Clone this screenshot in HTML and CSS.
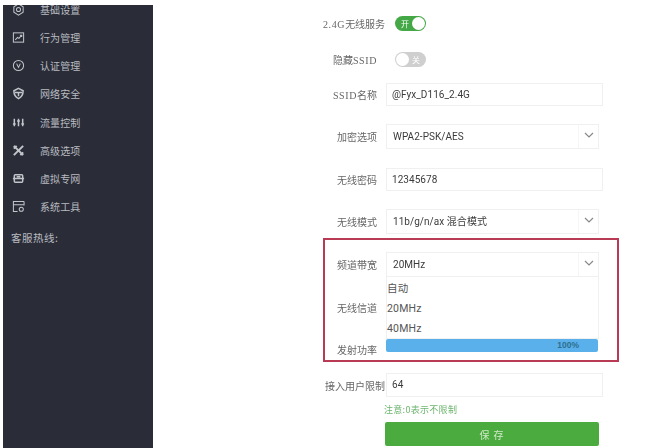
FILE: index.html
```html
<!DOCTYPE html>
<html lang="zh">
<head>
<meta charset="utf-8">
<title>2.4G无线设置</title>
<link rel="stylesheet" href="styles.css">
</head>
<body>
<div class="page">
  <aside class="sidebar">
    <ul class="menu">
      <li class="menu-item"><svg class="icon" viewBox="0 0 14 14"><path d="M7 1l5 3v6l-5 3-5-3V4z"/><circle cx="7" cy="7" r="2.2"/></svg><span>基础设置</span></li>
      <li class="menu-item"><svg class="icon" viewBox="0 0 14 14"><rect x="1.5" y="2" width="11" height="10"/><path d="M3.5 9.5L6 7l1.5 1L10.500 4.500M8.500 4.500h2v2"/></svg><span>行为管理</span></li>
      <li class="menu-item"><svg class="icon" viewBox="0 0 14 14"><circle cx="7" cy="7" r="5.500"/><path d="M5 5l2 4 2-4"/></svg><span>认证管理</span></li>
      <li class="menu-item"><svg class="icon icon-bold" viewBox="0 0 14 14"><path d="M7 1.500l5 2.500c0 4-2 7-5 8.500-3-1.500-5-4.500-5-8.500z"/><path d="M3 6h8M7 6v4"/></svg><span>网络安全</span></li>
      <li class="menu-item"><svg class="icon icon-bold" viewBox="0 0 14 14"><path d="M2.500 3v8M7 3v8M11.500 3v8M1 8.500h3M5.500 5.500h3M10 8.500h3"/></svg><span>流量控制</span></li>
      <li class="menu-item"><svg class="icon icon-heavy" viewBox="0 0 14 14"><path d="M2 2l10 10M12 2L2 12M2 5l3-3M9 12l3-3"/></svg><span>高级选项</span></li>
      <li class="menu-item"><svg class="icon icon-bold" viewBox="0 0 14 14"><rect x="2.500" y="3" width="9" height="8" rx="1"/><path d="M1 7h12M5 5h4"/></svg><span>虚拟专网</span></li>
      <li class="menu-item"><svg class="icon" viewBox="0 0 14 14"><path d="M13 1.500H1.500v11H6M13 1.500V6M1.500 5H13"/><circle cx="10" cy="10" r="2.200"/></svg><span>系统工具</span></li>
    </ul>
    <p class="hotline">客服热线:</p>
  </aside>
  <main class="main">
    <form class="form">
      <div class="row row-toggle-first">
        <label class="label wide"><span class="latin">2.4G</span>无线服务</label>
        <span class="toggle toggle-on"><span class="toggle-text">开</span><span class="knob"></span></span>
      </div>
      <div class="row row-toggle-second">
        <label class="label">隐藏<span class="latin">SSID</span></label>
        <span class="toggle toggle-off"><span class="knob"></span><span class="toggle-text">关</span></span>
      </div>
      <div class="row">
        <label class="label"><span class="latin">SSID</span>名称</label>
        <div class="input">@Fyx_D116_2.4G</div>
      </div>
      <div class="row">
        <label class="label">加密选项</label>
        <div class="select"><span class="select-value">WPA2-PSK/AES</span><span class="select-arrow"><svg class="chevron" viewBox="0 0 10 6"><path d="M1 1l4 4 4-4"/></svg></span></div>
      </div>
      <div class="row row-loose">
        <label class="label">无线密码</label>
        <div class="input">12345678</div>
      </div>
      <div class="row">
        <label class="label">无线模式</label>
        <div class="select"><span class="select-value">11b/g/n/ax 混合模式</span><span class="select-arrow"><svg class="chevron" viewBox="0 0 10 6"><path d="M1 1l4 4 4-4"/></svg></span></div>
      </div>
      <div class="row">
        <label class="label">频道带宽</label>
        <div class="select select-open">
          <span class="select-value">20MHz</span><span class="select-arrow"><svg class="chevron" viewBox="0 0 10 6"><path d="M1 1l4 4 4-4"/></svg></span>
          <ul class="dropdown">
            <li class="option">自动</li>
            <li class="option">20MHz</li>
            <li class="option">40MHz</li>
          </ul>
        </div>
      </div>
      <div class="row row-channel">
        <label class="label">无线信道</label>
      </div>
      <div class="row row-power">
        <label class="label">发射功率</label>
        <div class="progress"><span class="progress-text">100%</span></div>
      </div>
      <div class="row">
        <label class="label wide">接入用户限制</label>
        <div class="input input-tall">64</div>
      </div>
      <p class="note">注意:0表示不限制</p>
      <button class="save" type="button">保 存</button>
    </form>
    <div class="highlight"></div>
  </main>
</div>
</body>
</html>
```
FILE: styles.css
```css
* { box-sizing: border-box; }
html, body { margin: 0; padding: 0; height: 100%; overflow: hidden; background: #fff; }
ul { list-style: none; margin: 0; padding: 0; }
p { margin: 0; }
.page {
  display: flex;
  height: 448px;
  padding-left: 3px;
  filter: blur(0.55px);
  font-family: "Noto Sans CJK SC", "Liberation Sans", sans-serif;
}
.sidebar {
  width: 150px;
  margin-top: 5px;
  flex: none;
  background: #2a2d38;
  color: #b9bbc0;
  overflow: hidden;
  font-size: 10px;
}
.menu { margin-top: -10px; }
.menu-item {
  display: flex;
  align-items: center;
  height: 28.25px;
  padding-left: 9px;
  letter-spacing: 0.1px;
}
.icon {
  width: 13px;
  height: 13px;
  margin-right: 15px;
  fill: none;
  stroke: #c2c4c9;
  stroke-width: 1.1;
}
.icon-bold { stroke-width: 1.6; }
.icon-heavy { stroke-width: 2.2; }
.hotline { margin: 10px 0 0 8px; font-size: 10.500px; letter-spacing: 0.5px; line-height: 14px; }
.main { position: relative; flex: 1; padding-left: 170px; }
.form { display: flex; flex-direction: column; gap: 18px; padding-top: 16px; }
.row { display: flex; align-items: center; }
.row-toggle-first { height: 15px; margin-bottom: 3px; }
.row-toggle-second { height: 15px; margin-bottom: -2px; }
.row-loose { margin-top: 1px; }
.row-channel { height: 25px; }
.row-power { height: 24px; margin-top: -1px; margin-bottom: -6px; }
.label {
  flex: none;
  width: 63px;
  padding-right: 9px;
  text-align: right;
  white-space: nowrap;
  font-family: "Liberation Serif", "Noto Sans CJK SC", serif;
  font-size: 10px;
  color: #666;
}
.label.wide { padding-right: 1px; }
.latin { letter-spacing: 0.6px; }
.toggle {
  display: flex;
  align-items: center;
  width: 31px;
  height: 15px;
  margin-left: 9px;
  padding: 1px;
  border-radius: 8px;
  font-size: 8px;
  color: #fff;
}
.toggle-on { background: #45a847; justify-content: space-between; padding-left: 6px; }
.toggle-off { background: #cfcfcf; justify-content: space-between; padding-right: 6px; }
.knob { width: 13px; height: 13px; border-radius: 50%; background: #fff; }
.input {
  width: 217px;
  height: 23px;
  padding-left: 5px;
  border: 1px solid #f0f0f0;
  font-family: Roboto, "Noto Sans CJK SC", sans-serif;
  font-size: 10px;
  letter-spacing: 0.05px;
  line-height: 21px;
  color: #3b3b3b;
}
.input-tall { height: 24px; line-height: 22px; }
.select {
  position: relative;
  display: flex;
  width: 213px;
  height: 25px;
  border: 1px solid #f0f0f0;
  font-family: Roboto, "Noto Sans CJK SC", sans-serif;
  font-size: 10px;
  letter-spacing: 0.05px;
  line-height: 23px;
  color: #3b3b3b;
}
.select-value { flex: 1; padding-left: 6px; white-space: nowrap; }
.select-arrow {
  display: flex;
  align-items: center;
  justify-content: center;
  width: 20px;
  border-left: 1px solid #f6f6f6;
}
.chevron { width: 10px; height: 6px; margin-top: -3px; fill: none; stroke: #888; stroke-width: 1.200; }
.dropdown {
  position: absolute;
  left: -1px;
  right: -1px;
  top: 24px;
  height: 62px;
  padding-top: 2px;
  background: #fff;
  border: 1px solid #f0f0f0;
  border-top: 0;
  z-index: 2;
}
.option { height: 20px; line-height: 20px; font-size: 10.500px; letter-spacing: 0.2px; color: #555; }
.progress {
  position: relative;
  align-self: flex-start;
  width: 212px;
  height: 13px;
  margin-top: 2px;
  border-radius: 2px;
  background: #59b0ea;
  z-index: 3;
}
.progress-text {
  position: absolute;
  right: 19px;
  top: 0;
  font-family: "Liberation Sans", sans-serif;
  font-size: 8.500px;
  font-weight: bold;
  line-height: 13px;
  color: #2f6f8f;
}
.note { margin-left: 61px; margin-top: -12px; height: 14px; font-size: 9px; line-height: 14px; color: #6cb56e; letter-spacing: 0.3px; }
.save {
  align-self: flex-start;
  width: 214px;
  height: 24px;
  margin-left: 62px;
  margin-top: -13px;
  padding: 0;
  border: 0;
  border-radius: 2px;
  background: #4cab3f;
  color: #cfe8c8;
  font-family: "Noto Sans CJK SC", sans-serif;
  font-size: 10px;
  letter-spacing: 1px;
}
.highlight {
  position: absolute;
  left: 170px;
  top: 238px;
  width: 296px;
  height: 124px;
  border: 2px solid #b93a55;
  pointer-events: none;
  z-index: 4;
}
```
